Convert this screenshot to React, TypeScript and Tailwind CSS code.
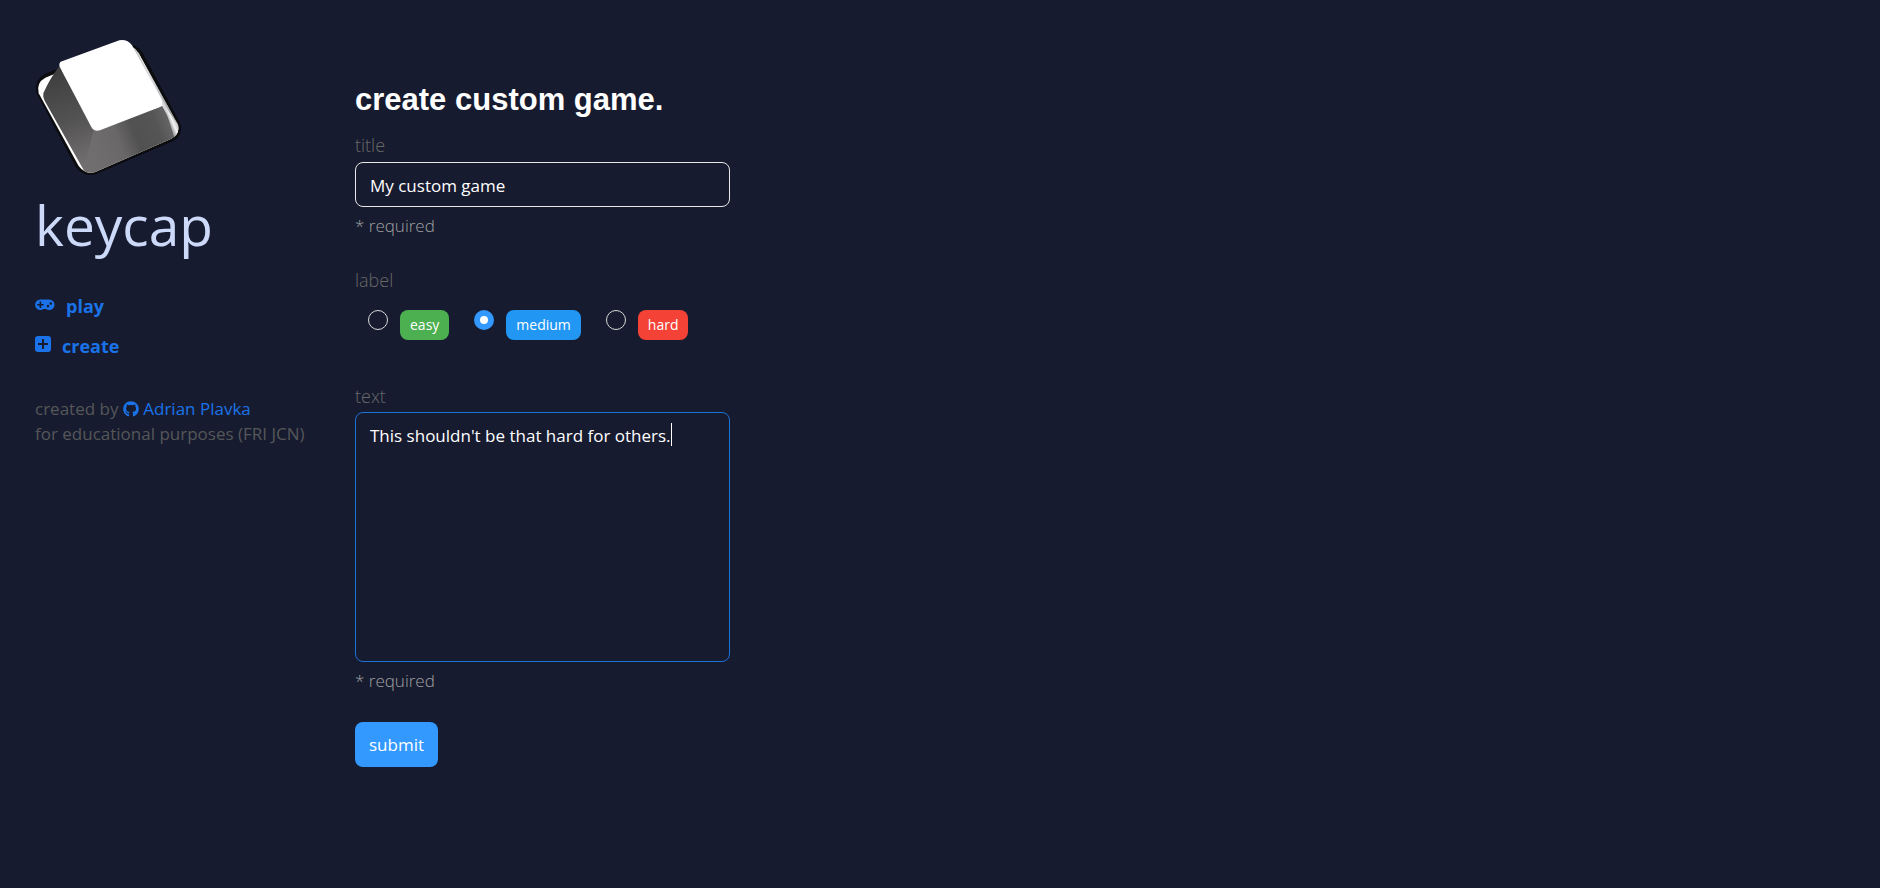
import { useState } from "react";
import { FaGithub } from "react-icons/fa";

function KeycapLogo() {
  return (
    <svg viewBox="0 0 540 480" className="-ml-[15px] h-40 w-45" role="img" aria-label="keycap logo">
      <defs>
        <linearGradient id="left" x1="100" y1="130" x2="190" y2="420" gradientUnits="userSpaceOnUse">
          <stop offset="0" stopColor="#3f3f3f" />
          <stop offset="0.5" stopColor="#545353" />
          <stop offset="1" stopColor="#757273" />
        </linearGradient>
        <linearGradient id="front" x1="210" y1="370" x2="460" y2="270" gradientUnits="userSpaceOnUse">
          <stop offset="0" stopColor="#716e70" />
          <stop offset="0.35" stopColor="#696768" />
          <stop offset="0.55" stopColor="#525152" />
          <stop offset="0.8" stopColor="#565556" />
          <stop offset="1" stopColor="#6a696a" />
        </linearGradient>
        <linearGradient id="right" x1="385" y1="160" x2="412" y2="147" gradientUnits="userSpaceOnUse">
          <stop offset="0" stopColor="#858586" />
          <stop offset="0.45" stopColor="#e0e1e4" />
          <stop offset="0.7" stopColor="#a2a4a8" />
          <stop offset="1" stopColor="#626468" />
        </linearGradient>
        <linearGradient id="corner" x1="446" y1="290" x2="480" y2="276" gradientUnits="userSpaceOnUse">
          <stop offset="0" stopColor="#777" />
          <stop offset="0.45" stopColor="#f4f4f4" />
          <stop offset="1" stopColor="#999" />
        </linearGradient>
        <filter id="shadow" x="-10%" y="-10%" width="120%" height="120%">
          <feGaussianBlur stdDeviation="2" />
        </filter>
      </defs>
      <path d="M75 132 L300 42 Q345 38 366 66 L480 280 Q490 316 460 332 L226 433 Q192 442 168 412 L50 190 Q42 150 75 132Z" fill="#08080c" filter="url(#shadow)" />
      <path d="M76 143 L300 50 Q342 48 356 70 L474 284 Q480 310 454 326 L224 427 Q196 434 176 408 L56 190 Q48 158 76 143Z" fill="#fff" />
      <path d="M118 108 Q88 148 70 190 Q68 200 74 212 L182 404 Q192 424 204 428 L226 302Z" fill="url(#left)" />
      <path d="M222 298 L427 228 L464 296 Q476 316 454 326 L224 427 Q204 432 190 420Z" fill="url(#front)" />
      <path d="M330 46 Q346 54 356 70 L474 284 Q478 300 468 314 L426 222Z" fill="url(#right)" />
      <path d="M432 224 L474 284 Q480 306 462 322 L456 300Z" fill="url(#corner)" />
      <path d="M122 95 L298 31 Q322 27 336 46 L424 207 Q431 224 418 232 L240 301 Q222 306 214 291 L119 110 Q116 100 122 95Z" fill="#fff" />
    </svg>
  );
}

function GamepadIcon() {
  return (
    <svg viewBox="0 0 20 12" className="mb-0.5 h-3 w-5" aria-hidden="true">
      <path
        fill="currentColor"
        fillRule="evenodd"
        d="M5.4 .5H14.2A5.3 5.3 0 0 1 14.2 11.1Q12.4 11.1 11.2 10H8.4Q7.2 11.1 5.4 11.1A5.3 5.3 0 0 1 5.4 .5ZM4.6 2.6V5H2.2V6.6H4.6V9H6.2V6.6H8.6V5H6.2V2.6ZM13 5.8A1.3 1.3 0 1 0 13 8.4A1.3 1.3 0 1 0 13 5.8ZM15.8 3.2A1.3 1.3 0 1 0 15.8 5.8A1.3 1.3 0 1 0 15.8 3.2Z"
      />
    </svg>
  );
}

function PlusSquareIcon() {
  return (
    <svg viewBox="0 0 16 16" className="mb-1 size-4" aria-hidden="true">
      <path
        fill="currentColor"
        fillRule="evenodd"
        d="M3 0H13A3 3 0 0 1 16 3V13A3 3 0 0 1 13 16H3A3 3 0 0 1 0 13V3A3 3 0 0 1 3 0ZM7 3V7H3V9H7V13H9V9H13V7H9V3Z"
      />
    </svg>
  );
}

const levels = [
  { name: "easy", color: "bg-[#4caf50]" },
  { name: "medium", color: "bg-[#2196f3]" },
  { name: "hard", color: "bg-[#f44336]" },
];

export default function App() {
  const [level, setLevel] = useState("medium");
  return (
    <div className="flex min-h-screen bg-[#171b2f] font-['Open_Sans',sans-serif] text-lg leading-6 font-light text-[#686868]">
      <aside className="flex w-80 shrink-0 flex-col pt-[30px] pl-[35px]">
        <KeycapLogo />
        <div className="text-[55px] leading-[70px] font-normal text-[#ccd9f9]">keycap</div>
        <nav className="mt-[34px] flex flex-col gap-4 font-bold text-[#1a73e8]">
          <a href="#play" className="flex items-center gap-[11px]">
            <GamepadIcon />
            play
          </a>
          <a href="#create" className="flex items-center gap-[11px]">
            <PlusSquareIcon />
            create
          </a>
        </nav>
        <footer className="mt-[38px] text-[17px] leading-[25px] font-normal text-[#555759]">
          created by{" "}
          <a href="#author" className="text-[#1a73e8]">
            <FaGithub size={16} className="inline align-[-2px]" /> Adrian Plavka
          </a>
          <br />
          for educational purposes (FRI JCN)
        </footer>
      </aside>
      <main className="flex-1 pt-20 pl-[35px]">
        <h1 className="font-['Liberation_Sans',sans-serif] text-[31px] leading-10 font-bold text-white">
          create custom game.
        </h1>
        <form className="flex max-w-[375px] flex-col items-start" onSubmit={(e) => e.preventDefault()}>
          <label htmlFor="title" className="mt-[13px]">title</label>
          <input
            id="title"
            defaultValue="My custom game"
            className="mt-[5px] h-[45px] w-full rounded-lg border border-[#e8e8e8] px-3.5 pt-0.5 text-[17px] font-normal text-white outline-none"
          />
          <p className="mt-[7px] text-[17px] text-[#a0a0a0]">* required</p>
          <fieldset className="mt-[30px]">
            <legend>label</legend>
            <div className="mt-[18px] flex gap-[25px] pl-[13px]">
              {levels.map(({ name, color }) => (
                <label key={name} className="flex items-start gap-3">
                  <input
                    type="radio"
                    name="level"
                    checked={level === name}
                    onChange={() => setLevel(name)}
                    className="size-5 appearance-none rounded-full border border-[#d9d9d9] checked:border-[6px] checked:border-[#3399ff] checked:bg-white"
                  />
                  <span className={`rounded-lg px-2.5 text-sm leading-[30px] font-normal text-white ${color}`}>{name}</span>
                </label>
              ))}
            </div>
          </fieldset>
          <label htmlFor="text" className="mt-11">text</label>
          <div className="relative mt-1 flex w-full">
            <textarea
              id="text"
              defaultValue="This shouldn't be that hard for others."
              className="h-[250px] w-full resize-none rounded-lg border border-[#1a73d8] px-3.5 py-[11px] text-[17px] font-normal text-white outline-none"
            />
            <span aria-hidden="true" className="absolute top-[11px] left-[316px] h-[23px] w-px bg-white" />
          </div>
          <p className="mt-[7px] text-[17px] text-[#a0a0a0]">* required</p>
          <button type="submit" className="mt-[29px] h-[45px] rounded-lg bg-[#3399ff] px-3.5 text-[17px] font-normal text-white">
            submit
          </button>
        </form>
      </main>
    </div>
  );
}
